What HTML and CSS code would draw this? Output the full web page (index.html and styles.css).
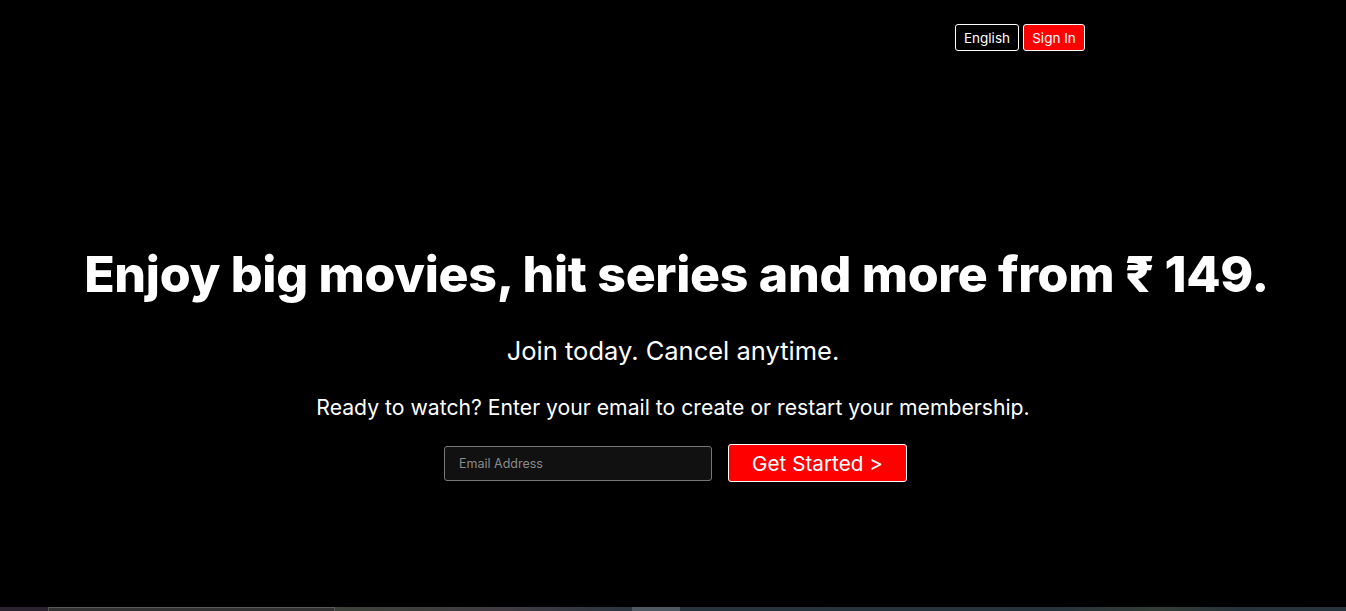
FILE: index.html
```html
<!DOCTYPE html>
<html lang="en">
<head>
<meta charset="utf-8">
<title>Netflix</title>
<link rel="stylesheet" href="styles.css">
</head>
<body>
<div class="hero">
  <nav class="nav">
    <button class="btn btn-lang">English</button>
    <button class="btn btn-signin">Sign In</button>
  </nav>
  <main class="hero-content">
    <h1 class="headline">Enjoy big movies, hit series and more from ₹ 149.</h1>
    <p class="sub">Join today. Cancel anytime.</p>
    <p class="ready">Ready to watch? Enter your email to create or restart your membership.</p>
    <form class="signup">
      <input class="email" type="email" placeholder="Email Address">
      <button class="btn btn-start" type="button">Get Started &gt;</button>
    </form>
  </main>
</div>
<div class="strip">
  <div class="seg seg1"></div>
  <div class="seg seg2"></div>
  <div class="seg seg3"></div>
  <div class="seg seg4"></div>
  <div class="seg seg5"></div>
</div>
</body>
</html>
```
FILE: styles.css
```css
* { box-sizing: border-box; }
html, body { margin: 0; padding: 0; background: #000; }
body {
  font-family: Inter, "Noto Sans", "DejaVu Sans", sans-serif;
  color: #fff;
  width: 1346px;
  height: 611px;
  overflow: hidden;
}
.hero {
  height: 607px;
  background: #000;
  display: flex;
  flex-direction: column;
}
.nav {
  display: flex;
  justify-content: flex-end;
  gap: 4px;
  padding: 24px 261px 0 0;
}
.btn {
  font-family: inherit;
  color: #fff;
  border: 1px solid #fff;
  border-radius: 3px;
  cursor: pointer;
}
.btn-lang {
  background: #000;
  width: 64px;
  height: 27px;
  font-size: 13.5px;
  padding: 0;
}
.btn-signin {
  background: #ff0000;
  width: 62px;
  height: 27px;
  font-size: 13.5px;
  padding: 0;
}
.hero-content {
  display: flex;
  flex-direction: column;
  align-items: center;
  padding-top: 193px;
}
.headline {
  margin: 0;
  padding-left: 7px;
  font-size: 50px;
  font-weight: 800;
  line-height: 60px;
  letter-spacing: -0.3px;
}
.sub {
  margin: 31px 0 0;
  font-size: 25.5px;
  line-height: 32px;
}
.ready {
  margin: 27px 0 0;
  font-size: 21.2px;
  line-height: 26px;
}
.signup {
  display: flex;
  align-items: center;
  gap: 16px;
  margin-top: 24px;
  margin-left: 5px;
}
.email {
  width: 268px;
  height: 35px;
  background: #111;
  border: 1px solid #777;
  border-radius: 3px;
  padding: 0 14px;
  font-family: inherit;
  font-size: 12.5px;
  color: #fff;
}
.email::placeholder { color: #8a8a8a; }
.btn-start {
  background: #ff0000;
  width: 179px;
  height: 38px;
  font-size: 20.7px;
  padding: 0;
}
.strip {
  display: flex;
  height: 4px;
}
.seg { height: 4px; }
.seg1 { width: 48px; background: #2b2430; }
.seg2 { width: 287px; background: #333; border-top: 1px solid #5a5a5a; border-left: 1px solid #555; border-right: 1px solid #555; }
.seg3 { width: 297px; background: linear-gradient(90deg, #3b4237 0%, #403b42 55%, #2b3640 100%); }
.seg4 { width: 48px; background: #4d5862; }
.seg5 { flex: 1; background: linear-gradient(90deg, #27333d 0%, #26323c 55%, #333d36 72%, #26323c 85%, #27333d 100%); }
```
